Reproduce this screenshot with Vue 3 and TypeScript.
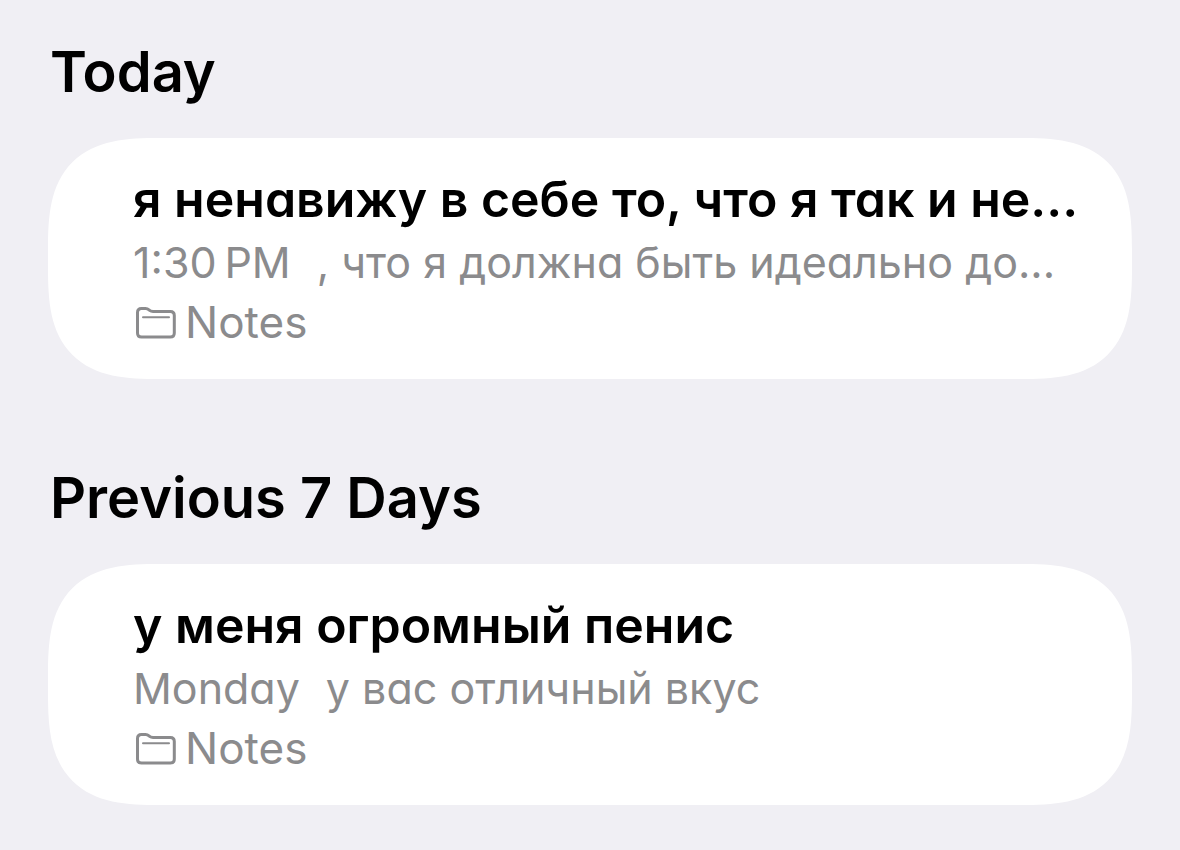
<script setup lang="ts">
interface Note {
  id: number
  title: string
  time: string
  preview: string
  folder: string
}

interface Section {
  heading: string
  notes: Note[]
}

const sections: Section[] = [
  {
    heading: 'Today',
    notes: [
      {
        id: 1,
        title: 'я ненавижу в себе то, что я так и не...',
        time: '1:30\u2009PM',
        preview: ', что я должна быть идеально до...',
        folder: 'Notes',
      },
    ],
  },
  {
    heading: 'Previous 7 Days',
    notes: [
      {
        id: 2,
        title: 'у меня огромный пенис',
        time: 'Monday',
        preview: 'у вас отличный вкус',
        folder: 'Notes',
      },
    ],
  },
]
</script>

<template>
  <main class="notes">
    <section v-for="section in sections" :key="section.heading" class="section">
      <h2 class="heading">{{ section.heading }}</h2>
      <article v-for="note in section.notes" :key="note.id" class="card">
        <h3 class="title">{{ note.title }}</h3>
        <p class="summary">
          <time class="time">{{ note.time }}</time>
          <span class="preview">{{ note.preview }}</span>
        </p>
        <p class="folder">
          <svg class="folder-icon" viewBox="0 0 44 34" aria-hidden="true">
            <path d="M4.5 27V6.5Q4.5 2.500 8.500 2.500H12.500Q14.500 2.500 16 3.800L17 4.700Q18 5.500 20 5.500H37.300Q41.300 5.500 41.300 9.500V27Q41.300 31 37.300 31H8.500Q4.500 31 4.500 27Z" />
            <path class="folder-fold" d="M10 11.300H36" />
          </svg>
          <span>{{ note.folder }}</span>
        </p>
      </article>
    </section>
  </main>
</template>

<style>
body {
  margin: 0;
  background: #f0eff4;
}
</style>

<style scoped>
.notes {
  display: flex;
  flex-direction: column;
  gap: 83px;
  padding: 36px 48px 45px;
  font-family: Inter, "Liberation Sans", sans-serif;
  color: #000;
}

.heading {
  margin: 0 0 30px 2px;
  font-size: 56px;
  line-height: 72px;
  font-weight: 600;
}

.card {
  box-sizing: border-box;
  padding: 30px 48px 27px 85px;
  border-radius: 84px;
  background: #fff;
  font-feature-settings: "cv11";
}

@supports (corner-shape: superellipse(1.5)) {
  .card {
    border-radius: 112px;
    corner-shape: superellipse(1.5);
  }
}

.title,
.summary,
.folder {
  margin: 0;
  overflow: hidden;
  white-space: nowrap;
}

.title {
  font-size: 50px;
  line-height: 63px;
  font-weight: 600;
}

.summary,
.folder {
  display: flex;
  color: #8b8b8d;
}

.summary {
  gap: 26px;
  font-size: 43px;
  line-height: 62px;
}

.folder {
  align-items: center;
  gap: 8px;
  font-size: 44px;
  line-height: 59px;
}

.folder-icon {
  width: 44px;
  height: 34px;
  fill: none;
  stroke: currentColor;
  stroke-width: 3;
  stroke-linecap: round;
}

.folder-fold {
  stroke-width: 2;
}
</style>
